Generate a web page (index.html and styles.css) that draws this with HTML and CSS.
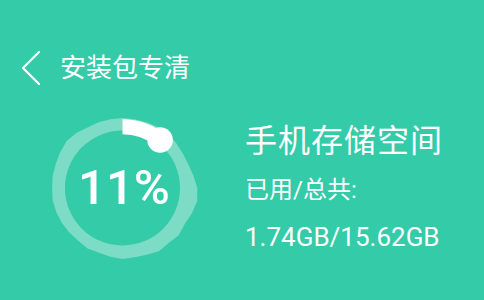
FILE: index.html
```html
<!DOCTYPE html>
<html lang="zh-CN">
<head>
<meta charset="utf-8">
<title>安装包专清</title>
<link rel="stylesheet" href="styles.css">
</head>
<body>
<div class="screen">
  <header class="bar">
    <svg class="back" width="20" height="34" viewBox="0 0 20 34" aria-hidden="true">
      <path d="M18 1 L2 17 L18 33" fill="none" stroke="#fff" stroke-width="2.2" stroke-linecap="round" stroke-linejoin="round"/>
    </svg>
    <h1 class="title">安装包专清</h1>
  </header>
  <section class="storage">
    <div class="gauge">
      <svg class="gauge-art" width="160" height="160" viewBox="42 108 160 160" aria-hidden="true">
        <polygon class="ring" transform="translate(122.5 188) scale(0.985) translate(-122 -186)" points="122,115 134.3,116.1 146.3,119.3 157.8,124.1 168.3,130.8 176.4,140.4 183.1,150.8 188.7,161.7 193.9,173.3 198,186 197.8,199.4 192.5,211.7 185.2,222.5 179.1,233.9 168.9,241.9 159,250.1 146.6,253.7 134.4,256.4 122,258 109.7,255.9 98.1,251.8 86.5,247.5 77,239.6 68,231.3 60.5,221.5 54.8,210.5 51.1,198.5 50.5,186 51.1,173.5 54.3,161.4 58.8,149.5 65.3,138.4 75.1,130.1 86.5,124.5 97.7,119.3 109.7,116.1"/>
        <circle class="hole" cx="122.5" cy="188" r="57.5"/>
        <path class="arc" d="M122.5 126.8 A61.2 61.2 0 0 1 160.2 139.8" fill="none" stroke="#fff" stroke-width="15"/>
        <circle cx="160.1" cy="140" r="12.8" fill="#fff"/>
      </svg>
      <span class="pct">11%</span>
    </div>
    <div class="info">
      <p class="info-title">手机存储空间</p>
      <p class="info-label">已用/总共:</p>
      <p class="info-value">1.74GB/15.62GB</p>
    </div>
  </section>
</div>
</body>
</html>
```

FILE: styles.css
```css
html, body {
  margin: 0;
  padding: 0;
}

body {
  background: #33cba8;
  color: #fff;
  font-family: Roboto, "Noto Sans CJK SC", sans-serif;
}

.screen {
  width: 484px;
  height: 300px;
  overflow: hidden;
}

.bar {
  display: flex;
  align-items: center;
  height: 36px;
  padding: 50px 0 0 21px;
}

.back {
  display: block;
  flex: none;
}

.title {
  margin: 0 0 0 19px;
  font-size: 26px;
  font-weight: 400;
  line-height: 36px;
}

.storage {
  display: flex;
  align-items: flex-start;
  padding: 22px 0 0 42px;
}

.gauge {
  display: grid;
  width: 160px;
  height: 160px;
  flex: none;
}

.gauge-art,
.pct {
  grid-area: 1 / 1;
}

.ring {
  fill: #7ddcc5;
}

.hole {
  fill: #33cba8;
}

.pct {
  align-self: center;
  justify-self: center;
  margin: 0 0 0 4px;
  font-size: 49px;
  font-weight: 500;
  line-height: 60px;
}

.info {
  margin: 13px 0 0 43px;
}

.info p {
  margin: 0;
}

.info-title {
  font-size: 32px;
  letter-spacing: 1px;
  line-height: 40px;
}

.info-label {
  margin-top: 13px !important;
  font-size: 24px;
  line-height: 32px;
}

.info-value {
  margin-top: 15px !important;
  font-size: 26px;
  line-height: 32px;
}
```
